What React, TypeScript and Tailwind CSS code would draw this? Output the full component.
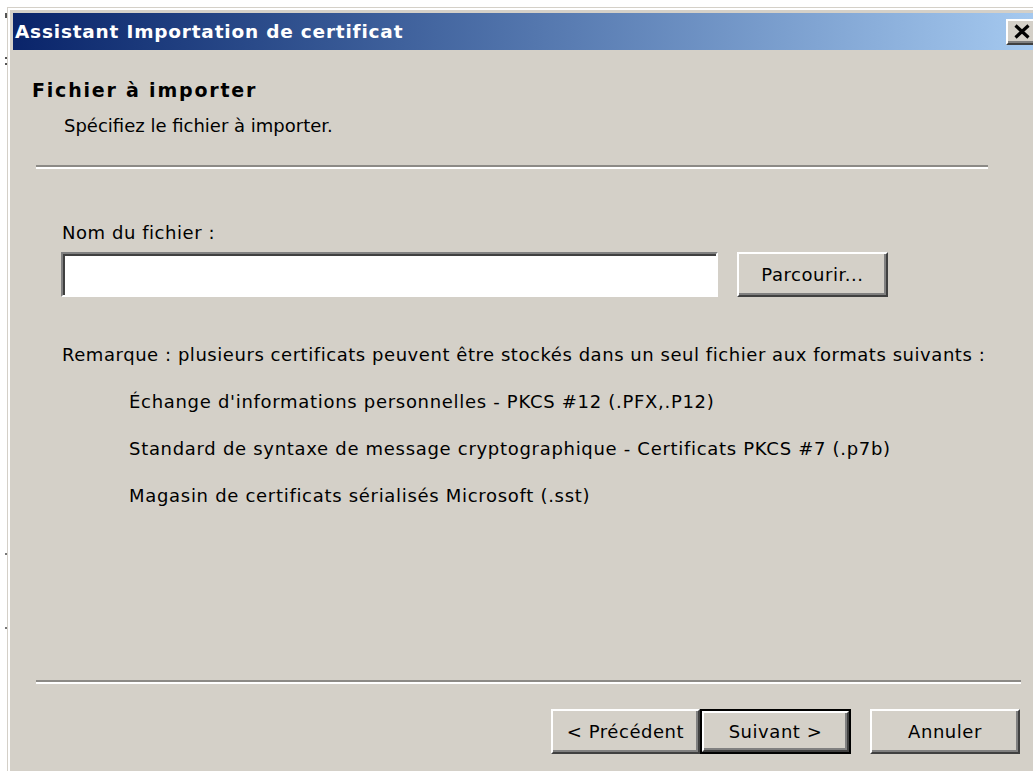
import React from "react";

// Raised 3D push button in the classic Windows style
function PushButton({
  label,
  width,
  isDefault = false,
}: {
  label: string;
  width: string;
  isDefault?: boolean;
}) {
  const face = (
    <div className="flex h-full w-full items-center justify-center border-t-2 border-l-2 border-b-2 border-r-2 border-t-white border-l-white border-b-[#404040] border-r-[#404040] bg-[#d4d0c8] text-[18px] tracking-[0.55px] text-black shadow-[inset_-2px_-2px_0_#808080]">
      {label}
    </div>
  );
  if (isDefault) {
    return (
      <div className={`${width} h-[45px] border-2 border-black`}>{face}</div>
    );
  }
  return <div className={`${width} h-[45px]`}>{face}</div>;
}

export default function App() {
  return (
    <div className="relative h-[771px] w-[1033px] overflow-hidden bg-white font-['DejaVu_Sans',sans-serif] text-black">
      {/* stray bits of the window behind */}
      <div className="absolute left-[5px] top-[13px] h-[5px] w-[2px] bg-[#555]" />
      <div className="absolute left-[5px] top-[57px] h-[2px] w-[2px] bg-[#555]" />
      <div className="absolute left-[5px] top-[63px] h-[2px] w-[2px] bg-[#555]" />
      <div className="absolute left-[5px] top-[553px] h-[2px] w-[2px] bg-[#777]" />
      <div className="absolute left-[5px] top-[627px] h-[2px] w-[2px] bg-[#777]" />

      {/* dialog frame */}
      <div className="ml-[7px] mt-[7px] h-[764px] w-[1031px] bg-[#d4d0c8] pl-[1px] pt-[1px]">
        <div className="flex h-full flex-col border-l-2 border-t-2 border-white pl-[3px] pt-[3px]">
          {/* caption */}
          <div className="flex h-[37px] items-center justify-between bg-gradient-to-r from-[#0a246a] to-[#a6caf0] pl-[2px]">
            <span className="text-[18.5px] font-bold tracking-[0.8px] text-white">
              Assistant Importation de certificat
            </span>
            <div className="flex h-[26px] w-[32px] items-center justify-center border-t-2 border-l-2 border-b-2 border-r-2 border-t-white border-l-white border-b-[#404040] border-r-[#404040] bg-[#d4d0c8] shadow-[inset_-2px_-2px_0_#808080]">
              <svg width="18" height="15" viewBox="0 0 18 15">
                <path
                  d="M2.5 1.5 L15.5 13.5 M15.5 1.5 L2.5 13.5"
                  stroke="#000"
                  strokeWidth="3.2"
                  fill="none"
                />
              </svg>
            </div>
          </div>

          {/* page header */}
          <div className="pl-[19px] pt-[29px]">
            <div className="text-[19px] font-bold leading-[22px] tracking-[1.8px]">
              Fichier à importer
            </div>
            <div className="mt-[14px] pl-[32px] text-[18px] leading-[22px] tracking-[0px]">
              Spécifiez le fichier à importer.
            </div>
          </div>
          <div className="ml-[23px] mt-[28px] w-[952px]">
            <div className="h-[2px] bg-[#8c8a86]" />
            <div className="h-[2px] bg-white" />
          </div>

          {/* body */}
          <div className="flex-1 pl-[49px] text-[18px] leading-[22px] tracking-[0.55px]">
            <div className="mt-[53px]">Nom du fichier :</div>
            <div className="mt-[8px] flex items-center">
              <div className="ml-[-1px] h-[45px] w-[657px] border-t-2 border-l-2 border-b-2 border-r-2 border-t-[#808080] border-l-[#808080] border-b-white border-r-white bg-white shadow-[inset_2px_2px_0_#404040]" />
              <div className="ml-[19px]">
                <PushButton label="Parcourir..." width="w-[151px]" />
              </div>
            </div>
            <div className="mt-[47px]">
              Remarque : plusieurs certificats peuvent être stockés dans un seul
              fichier aux formats suivants :
            </div>
            <div className="mt-[25px] flex flex-col gap-[25px] pl-[67px] tracking-[0.7px]">
              <div>Échange d'informations personnelles - PKCS #12 (.PFX,.P12)</div>
              <div>
                Standard de syntaxe de message cryptographique - Certificats
                PKCS #7 (.p7b)
              </div>
              <div>Magasin de certificats sérialisés Microsoft (.sst)</div>
            </div>
          </div>

          {/* footer */}
          <div className="ml-[23px] w-[985px]">
            <div className="h-[2px] bg-[#8c8a86]" />
            <div className="h-[2px] bg-white" />
          </div>
          <div className="mt-[25px] flex h-[45px] items-center pl-[538px]">
            <PushButton label="< Précédent" width="w-[149px]" />
            <PushButton label="Suivant >" width="w-[151px]" isDefault />
            <div className="ml-[19px]">
              <PushButton label="Annuler" width="w-[150px]" />
            </div>
          </div>
          <div className="h-[17px]" />
        </div>
      </div>
    </div>
  );
}
